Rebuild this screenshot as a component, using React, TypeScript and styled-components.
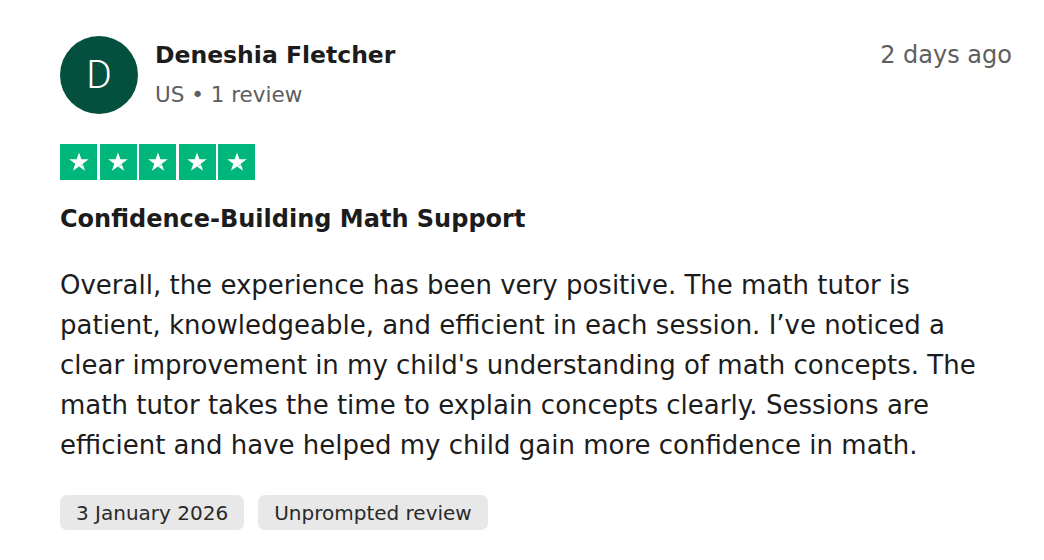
import React from "react";
import styled, { createGlobalStyle } from "styled-components";

const Global = createGlobalStyle`
  html, body { margin: 0; padding: 0; background: #ffffff; }
  body { font-family: "DejaVu Sans", Inter, sans-serif; color: #1c1c1c; }
`;

const Card = styled.article`
  box-sizing: border-box;
  width: 1044px;
  padding: 36px 32px 0 60px;
  display: flex;
  flex-direction: column;
`;

const Header = styled.header`
  display: flex;
  align-items: flex-start;
  gap: 17px;
`;

const Avatar = styled.div`
  width: 78px;
  height: 78px;
  border-radius: 50%;
  background: #04503f;
  color: #ffffff;
  display: flex;
  align-items: center;
  justify-content: center;
  font-family: Roboto, "Liberation Sans", sans-serif;
  font-size: 39px;
  font-weight: 300;
  flex-shrink: 0;
`;

const Who = styled.div`
  flex: 1;
  display: flex;
  flex-direction: column;
  padding-top: 2px;
`;

const Name = styled.div`
  font-size: 23.5px;
  font-weight: 700;
  line-height: 34px;
  color: #1c1c1c;
`;

const Meta = styled.div`
  font-size: 21.5px;
  line-height: 34px;
  margin-top: 6px;
  color: #5e5e5e;
`;

const When = styled.time`
  font-size: 24px;
  line-height: 34px;
  color: #5e5e5e;
  padding-top: 2px;
`;

const Stars = styled.div`
  display: flex;
  gap: 2.5px;
  margin-top: 30px;
`;

const Star = styled.div`
  width: 37px;
  height: 36px;
  background: #00b67a;
  display: flex;
  align-items: center;
  justify-content: center;
`;

const Title = styled.h2`
  margin: 21px 0 0;
  font-size: 24px;
  font-weight: 700;
  line-height: 36px;
  color: #1c1c1c;
`;

const Body = styled.p`
  margin: 28px 0 0;
  font-size: 26px;
  line-height: 40px;
  color: #1c1c1c;
`;

const Tags = styled.div`
  display: flex;
  gap: 14px;
  margin-top: 30px;
`;

const Tag = styled.span`
  background: #e8e8e8;
  border-radius: 7px;
  height: 35px;
  padding: 0 16px;
  display: flex;
  align-items: center;
  font-size: 20px;
  color: #2a2a2a;
`;

const StarIcon = () => (
  <svg width="22" height="22" viewBox="0 0 24 24">
    <path
      fill="#ffffff"
      d="M12 1.5l2.6 7.6h8l-6.5 4.8 2.5 7.7L12 16.8l-6.6 4.8 2.5-7.7L1.4 9.1h8z"
    />
    <path fill="#00b67a" opacity="0.35" d="M16.1 13.9l0.7 2.2L12 16.8z" />
  </svg>
);

const lines = [
  "Overall, the experience has been very positive. The math tutor is",
  "patient, knowledgeable, and efficient in each session. I’ve noticed a",
  "clear improvement in my child's understanding of math concepts. The",
  "math tutor takes the time to explain concepts clearly. Sessions are",
  "efficient and have helped my child gain more confidence in math.",
];

export default function App() {
  return (
    <>
      <Global />
      <Card>
        <Header>
          <Avatar>D</Avatar>
          <Who>
            <Name>Deneshia Fletcher</Name>
            <Meta>US • 1 review</Meta>
          </Who>
          <When>2 days ago</When>
        </Header>
        <Stars>
          {[0, 1, 2, 3, 4].map((i) => (
            <Star key={i}>
              <StarIcon />
            </Star>
          ))}
        </Stars>
        <Title>Confidence-Building Math Support</Title>
        <Body>
          {lines.map((l, i) => (
            <React.Fragment key={i}>
              {l}
              {i < lines.length - 1 && <br />}
            </React.Fragment>
          ))}
        </Body>
        <Tags>
          <Tag>3 January 2026</Tag>
          <Tag>Unprompted review</Tag>
        </Tags>
      </Card>
    </>
  );
}
